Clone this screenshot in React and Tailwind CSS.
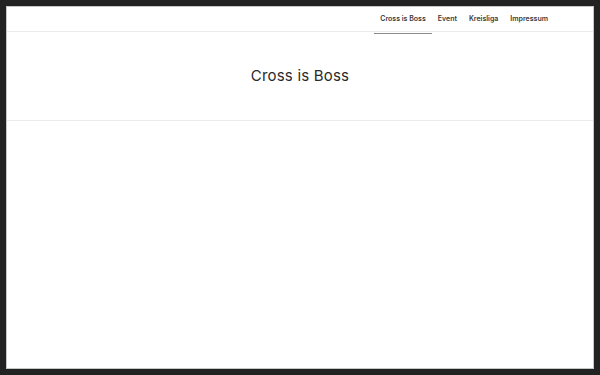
const navItems = ['Cross is Boss', 'Event', 'Kreisliga', 'Impressum'];

export default function App() {
  return (
    <div className="h-[375px] w-[600px] bg-[#222222] p-[6px] pr-[6px]" style={{ fontFamily: 'Inter, "Open Sans", sans-serif' }}>
      <div className="flex h-full flex-col border border-[#c8c8c8] bg-white">
        {/* Top nav */}
        <header className="flex h-[25px] shrink-0 items-center justify-end border-b border-[#ececec] pr-[39px]">
          <nav className="flex h-full items-center">
            {navItems.map((item, i) => (
              <a
                key={item}
                className="relative flex h-full items-center px-[6px] text-[7px] font-semibold text-[#3a3a3a]"
              >
                {item}
                {i === 0 && (
                  <span className="absolute -bottom-[3px] left-0 right-0 h-px bg-[#8a8a8a]" />
                )}
              </a>
            ))}
          </nav>
        </header>

        {/* Page title */}
        <div className="flex h-[89px] shrink-0 items-center justify-center border-b border-[#ececec]">
          <h1 className="text-[15px] font-normal tracking-[0.2px] text-[#2a2a2a]">Cross is Boss</h1>
        </div>

        <main className="flex-1" />
      </div>
    </div>
  );
}
